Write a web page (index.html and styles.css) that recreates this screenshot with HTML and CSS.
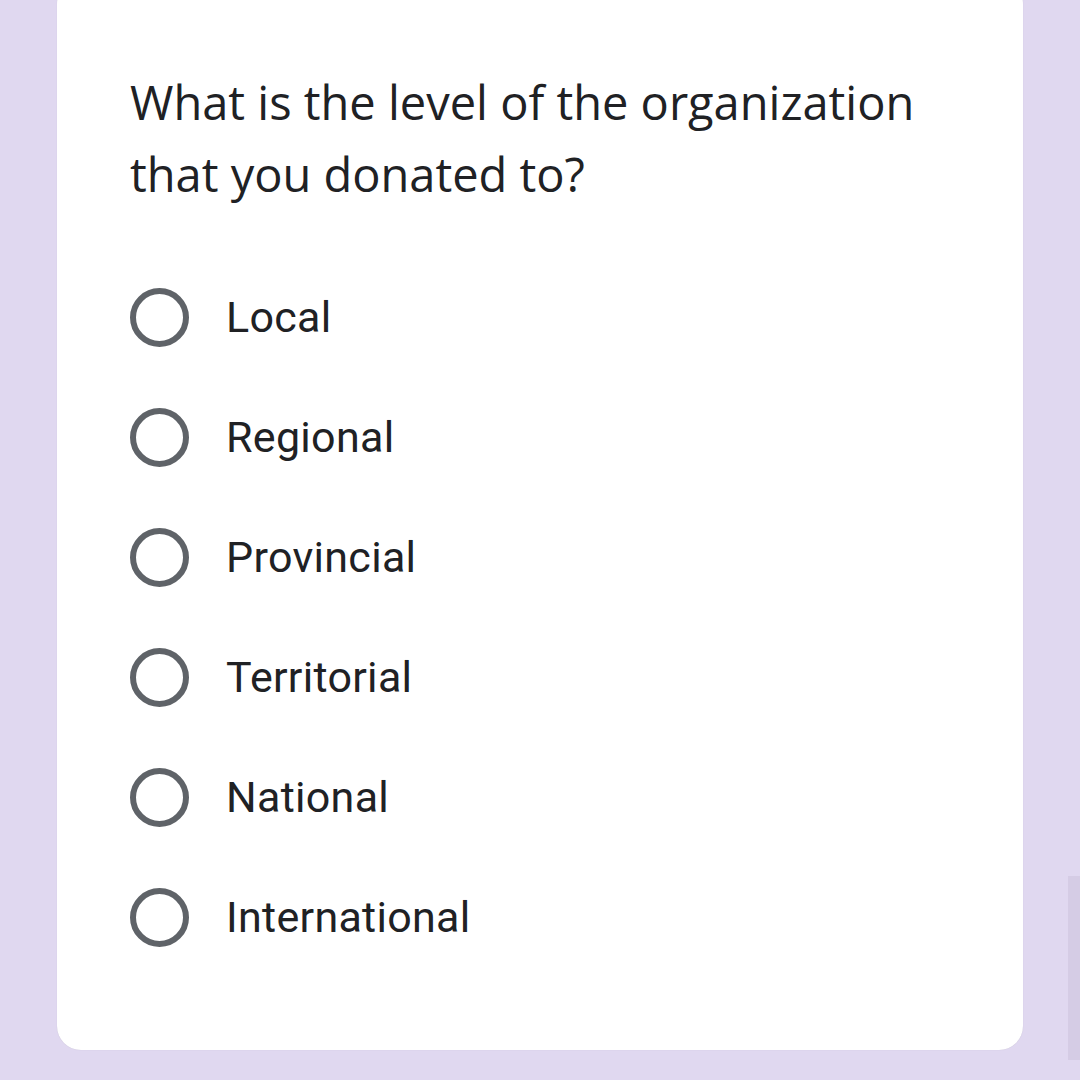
FILE: index.html
```html
<!DOCTYPE html>
<html>
<head>
<meta charset="utf-8">
<link rel="stylesheet" href="styles.css">
</head>
<body>
<div class="page">
  <div class="card">
    <div class="question">What is the level of the organization that you donated to?</div>
    <div class="options">
      <div class="option"><span class="radio"></span><span class="label">Local</span></div>
      <div class="option"><span class="radio"></span><span class="label">Regional</span></div>
      <div class="option"><span class="radio"></span><span class="label">Provincial</span></div>
      <div class="option"><span class="radio"></span><span class="label">Territorial</span></div>
      <div class="option"><span class="radio"></span><span class="label">National</span></div>
      <div class="option"><span class="radio"></span><span class="label">International</span></div>
    </div>
  </div>
  <div class="scrollbar"></div>
</div>
</body>
</html>
```

FILE: styles.css
```css
html, body {
  margin: 0;
  padding: 0;
  width: 1080px;
  height: 1080px;
  overflow: hidden;
  background: #e0d8f0;
}
.page {
  position: relative;
  width: 1080px;
  height: 1080px;
}
.card {
  margin-left: 57px;
  margin-top: -20px;
  width: 966px;
  height: 1070px;
  box-sizing: border-box;
  background: #ffffff;
  border-radius: 24px;
  padding: 86px 0 0 73px;
  box-shadow: 0 0 1px rgba(0,0,0,0.15);
}
.question {
  font-family: "Open Sans", sans-serif;
  font-size: 47px;
  line-height: 72px;
  color: #202124;
  width: 820px;
}
.options {
  display: flex;
  flex-direction: column;
  margin-top: 47px;
}
.option {
  display: flex;
  align-items: center;
  height: 120px;
}
.radio {
  width: 47px;
  height: 47px;
  border: 6px solid #5f6368;
  border-radius: 50%;
  flex: none;
}
.label {
  margin-left: 37px;
  font-family: Roboto, sans-serif;
  font-size: 43px;
  letter-spacing: 0.3px;
  color: #202124;
}
.scrollbar {
  position: absolute;
  right: 0;
  top: 896px;
  width: 12px;
  height: 184px;
  background: #d5cce5;
}
```
